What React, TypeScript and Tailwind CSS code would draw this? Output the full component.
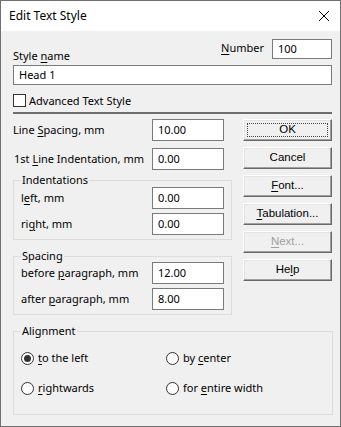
import React from "react";

const font = { fontFamily: '"Noto Sans", "Open Sans", sans-serif' };

function U({ children }: { children: React.ReactNode }) {
  return <span className="underline underline-offset-[2px] decoration-1">{children}</span>;
}

function Field({ value, w = "w-[72px]" }: { value: string; w?: string }) {
  return (
    <div className={`${w} h-[22px] shrink-0 bg-white border border-[#7a7a7a] flex items-center pl-[5px] text-black`}>
      {value}
    </div>
  );
}

function Btn({ children, def, disabled }: { children: React.ReactNode; def?: boolean; disabled?: boolean }) {
  return (
    <div
      className={`w-[89px] h-[22px] bg-[#f0f0f0] border-t border-l border-t-[#ffffff] border-l-[#ffffff] border-b border-r border-b-[#696969] border-r-[#696969] shadow-[inset_-1px_-1px_0_#a0a0a0,inset_1px_1px_0_#e3e3e3] flex items-center justify-center text-[11.5px] ${
        disabled ? "text-[#a0a0a0]" : "text-black"
      } relative`}
      style={{ fontFamily: '"Liberation Sans", Arial, sans-serif' }}
    >
      {def && <div className="absolute inset-[3px] border border-dotted border-[#444]" />}
      <span className="relative">{children}</span>
    </div>
  );
}

function Radio({ checked, children }: { checked?: boolean; children: React.ReactNode }) {
  return (
    <div className="flex items-center gap-[4px] h-[14px]">
      <div className="w-[13px] h-[13px] rounded-full border border-[#333] bg-white flex items-center justify-center">
        {checked && <div className="w-[7px] h-[7px] rounded-full bg-[#333]" />}
      </div>
      <span className="whitespace-nowrap">{children}</span>
    </div>
  );
}

function Group({ title, className, children }: { title: string; className?: string; children: React.ReactNode }) {
  return (
    <div className={`relative border border-[#dcdcdc] ${className ?? ""}`}>
      <span className="absolute left-[7px] top-[-9px] bg-[#f0f0f0] px-[1px] leading-[16px] whitespace-nowrap">{title}</span>
      {children}
    </div>
  );
}

function Row({ children, className }: { children: React.ReactNode; className?: string }) {
  return <div className={`flex items-center justify-between h-[22px] whitespace-nowrap ${className ?? ""}`}>{children}</div>;
}

export default function App() {
  return (
    <div className="w-[341px] h-[427px] border border-[#707070] bg-[#f0f0f0] text-[11px] text-black overflow-hidden" style={font}>
      {/* title bar */}
      <div className="h-[30px] bg-white flex items-center justify-between pl-[8px] pr-[9px]">
        <span className="text-[12px]">Edit Text Style</span>
        <svg width="12" height="12" viewBox="0 0 12 12" className="mr-[1px]">
          <path d="M1 1 L11 11 M11 1 L1 11" stroke="#000" strokeWidth="1" />
        </svg>
      </div>
      <div className="pl-[12px] pr-[8px] pt-[8px]">
        <div className="flex justify-between h-[20px]">
          <span className="mt-[10px] leading-[14px] whitespace-nowrap">
            Style <U>n</U>ame
          </span>
          <div className="flex items-center gap-[8px]">
            <span className="leading-[14px] mb-[2px]">
              <U>N</U>umber
            </span>
            <div className="w-[60px] h-[20px] bg-white border border-[#7a7a7a] flex items-center pl-[5px]">100</div>
          </div>
        </div>
        <div className="mt-[6px] h-[20px] w-[319px] bg-white border border-[#7a7a7a] flex items-center pl-[5px]">Head 1</div>
        <div className="mt-[9px] flex items-center gap-[3px] h-[13px]">
          <div className="w-[13px] h-[13px] border border-[#333] bg-white" />
          <span className="leading-[14px] whitespace-nowrap">Advanced Text Style</span>
        </div>
        <div className="mt-[5px] h-[2px] w-[319px] bg-[#6d6d6d]" />
        <div className="flex gap-[11px]">
          <div className="w-[220px] flex flex-col">
            <Row className="mt-[5px] pr-[8px]">
              <span>
                Line <U>S</U>pacing, mm
              </span>
              <Field value="10.00" />
            </Row>
            <Row className="mt-[7px] pr-[8px]">
              <span className="ml-[1px]">
                1st <U>L</U>ine Indentation, mm
              </span>
              <Field value="0.00" />
            </Row>
            <Group title="Indentations" className="mt-[10px] pt-[6px] pb-[4px] pl-[7px] pr-[7px]">
              <Row>
                <span>
                  l<U>e</U>ft, mm
                </span>
                <Field value="0.00" />
              </Row>
              <Row className="mt-[4px]">
                <span>
                  ri<U>g</U>ht, mm
                </span>
                <Field value="0.00" />
              </Row>
            </Group>
            <Group title="Spacing" className="mt-[16px] pt-[5px] pb-[4px] pl-[7px] pr-[7px]">
              <Row>
                <span>
                  before <U>p</U>aragraph, mm
                </span>
                <Field value="12.00" />
              </Row>
              <Row className="mt-[4px]">
                <span>
                  after <U>p</U>aragraph, mm
                </span>
                <Field value="8.00" />
              </Row>
            </Group>
          </div>
          <div className="flex flex-col gap-[6px] mt-[5px]">
            <Btn def>OK</Btn>
            <Btn>Cancel</Btn>
            <Btn>
              <U>F</U>ont...
            </Btn>
            <Btn>
              <U>T</U>abulation...
            </Btn>
            <Btn disabled>
              <U>N</U>ext...
            </Btn>
            <Btn>
              He<U>l</U>p
            </Btn>
          </div>
        </div>
        <Group title="Alignment" className="mt-[16px] w-[320px] h-[84px] pl-[7px] pt-[19px]">
          <div className="grid grid-cols-[145px_1fr] gap-y-[16px]">
            <Radio checked>
              <U>t</U>o the left
            </Radio>
            <Radio>
              by <U>c</U>enter
            </Radio>
            <Radio>
              <U>r</U>ightwards
            </Radio>
            <Radio>
              for <U>e</U>ntire width
            </Radio>
          </div>
        </Group>
      </div>
    </div>
  );
}
